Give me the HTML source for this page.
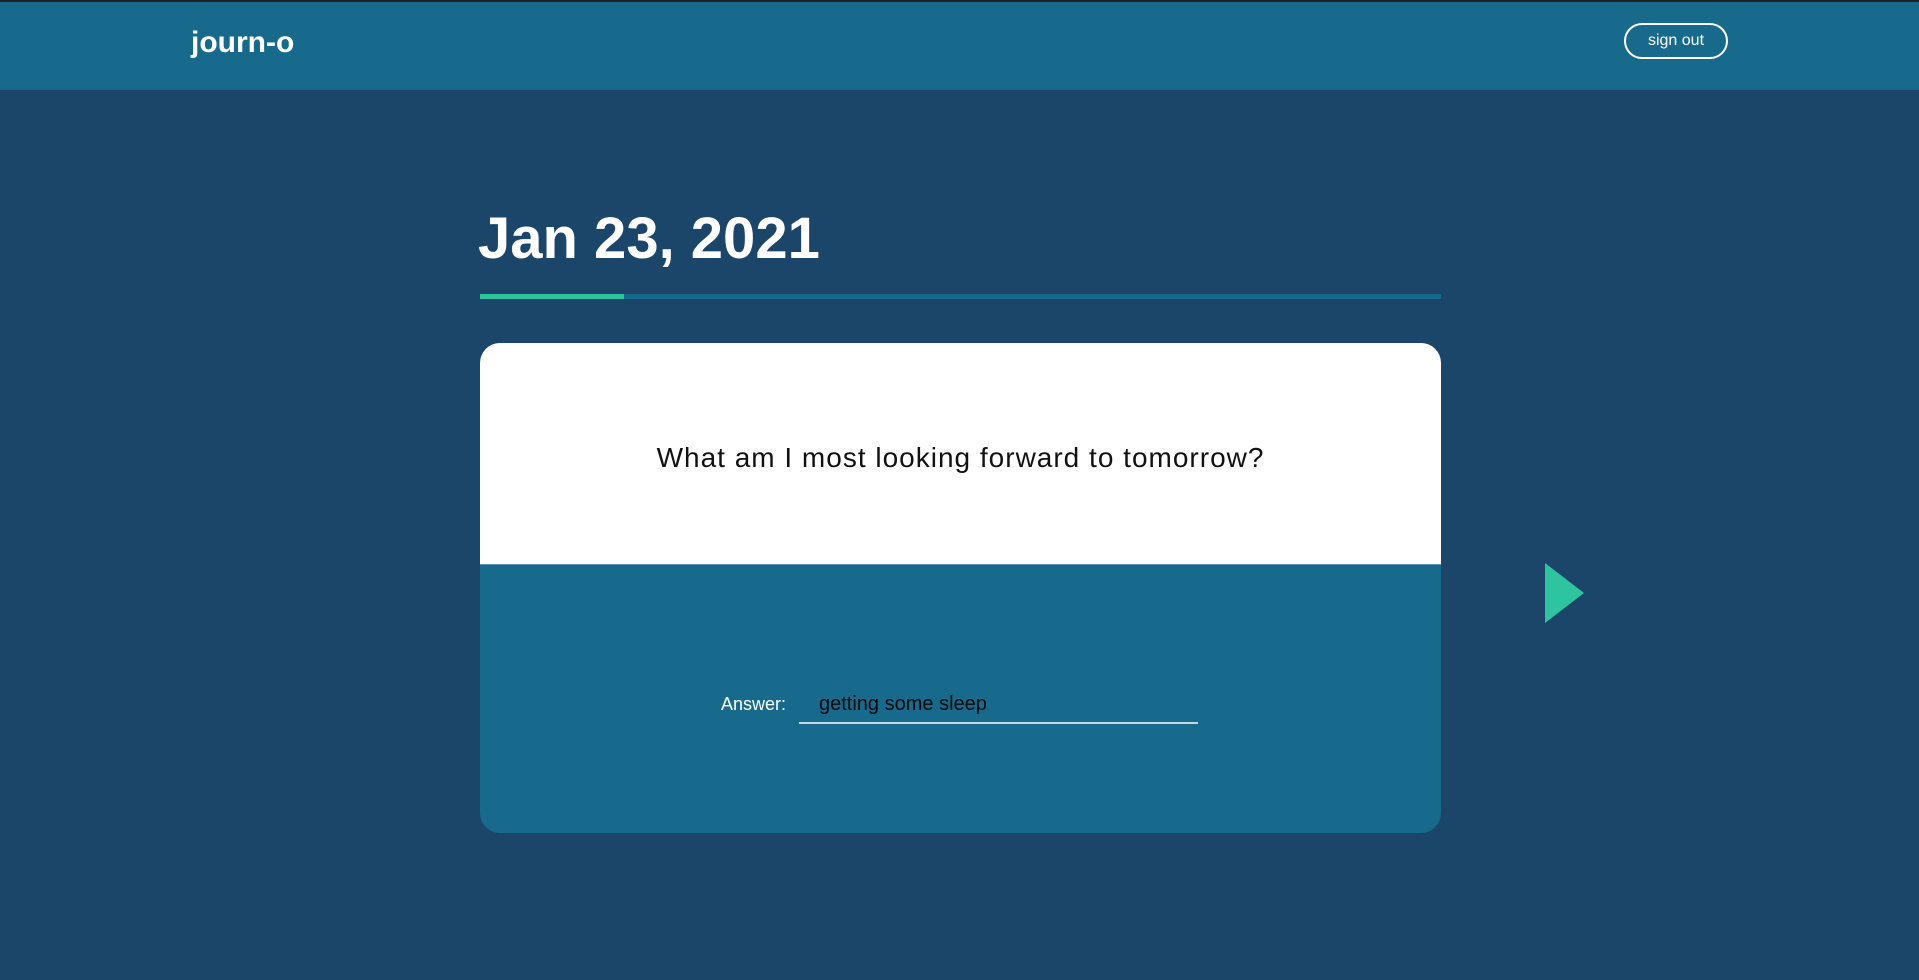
<!DOCTYPE html>
<html><head><style>
body{margin:0;width:1919px;height:980px;background:#1b4669;font-family:"Liberation Sans",sans-serif;position:relative;overflow:hidden}
.hdr{position:absolute;left:0;top:0;width:1919px;height:90px;background:#186a8d;border-top:2px solid #222;box-sizing:border-box}
.logo{position:absolute;left:191px;top:24px;font-size:30px;font-weight:bold;color:#fff}
.btn{position:absolute;left:1624px;top:21px;width:104px;height:36px;box-sizing:border-box;border:2px solid #fff;border-radius:18px;color:#fff;font-size:16px;text-align:center;line-height:32px}
.date{position:absolute;left:478px;top:206px;font-size:58px;font-weight:bold;color:#fff;line-height:66px}
.bar{position:absolute;left:480px;top:294px;width:961px;height:5px;background:#186a8d}
.bar div{width:144px;height:5px;background:#2ec4a0}
.card{position:absolute;left:480px;top:343px;width:961px;height:490px;border-radius:20px;overflow:hidden;background:#186a8d}
.q{height:221px;background:#fff;text-align:center;font-size:28px;letter-spacing:1px;line-height:229px;color:#111;border-bottom:1px solid #5a93ad}
.lab{position:absolute;left:721px;top:694px;font-size:18px;color:#fff}
.inp{position:absolute;left:799px;top:688px;width:399px;height:34px;border-bottom:2px solid #c8d6de}
.inp span{position:absolute;left:20px;top:5px;font-size:20px;color:#0a0a0a}
.arr{position:absolute;left:1545px;top:563px;width:0;height:0;border-top:30px solid transparent;border-bottom:30px solid transparent;border-left:39px solid #2ec4a0}
</style></head><body>
<div class="hdr"><div class="logo">journ-o</div><div class="btn">sign out</div></div>
<div class="date">Jan 23, 2021</div>
<div class="bar"><div></div></div>
<div class="card"><div class="q">What am I most looking forward to tomorrow?</div></div>
<div class="lab">Answer:</div>
<div class="inp"><span>getting some sleep</span></div>
<div class="arr"></div>
</body></html>
